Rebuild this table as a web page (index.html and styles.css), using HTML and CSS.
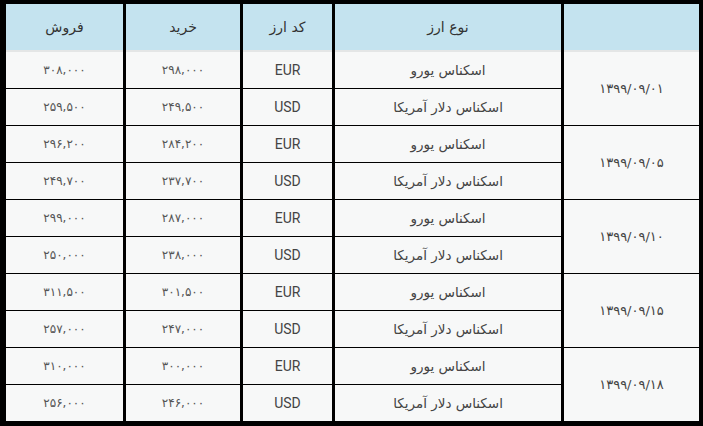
FILE: index.html
```html
<!DOCTYPE html>
<html lang="fa" dir="rtl">
<head>
<meta charset="utf-8">
<link rel="stylesheet" href="styles.css">
</head>
<body>
<div class="frame">
  <div class="grid">
    <div class="cell head"></div>
    <div class="cell head">نوع ارز</div>
    <div class="cell head">کد ارز</div>
    <div class="cell head">خرید</div>
    <div class="cell head">فروش</div>

    <div class="cell date">۱۳۹۹/۰۹/۰۱</div>
    <div class="cell fa">اسکناس یورو</div>
    <div class="cell code">EUR</div>
    <div class="cell num">۲۹۸,۰۰۰</div>
    <div class="cell num">۳۰۸,۰۰۰</div>
    <div class="cell fa">اسکناس دلار آمریکا</div>
    <div class="cell code">USD</div>
    <div class="cell num">۲۴۹,۵۰۰</div>
    <div class="cell num">۲۵۹,۵۰۰</div>

    <div class="cell date">۱۳۹۹/۰۹/۰۵</div>
    <div class="cell fa">اسکناس یورو</div>
    <div class="cell code">EUR</div>
    <div class="cell num">۲۸۴,۲۰۰</div>
    <div class="cell num">۲۹۶,۲۰۰</div>
    <div class="cell fa">اسکناس دلار آمریکا</div>
    <div class="cell code">USD</div>
    <div class="cell num">۲۳۷,۷۰۰</div>
    <div class="cell num">۲۴۹,۷۰۰</div>

    <div class="cell date">۱۳۹۹/۰۹/۱۰</div>
    <div class="cell fa">اسکناس یورو</div>
    <div class="cell code">EUR</div>
    <div class="cell num">۲۸۷,۰۰۰</div>
    <div class="cell num">۲۹۹,۰۰۰</div>
    <div class="cell fa">اسکناس دلار آمریکا</div>
    <div class="cell code">USD</div>
    <div class="cell num">۲۳۸,۰۰۰</div>
    <div class="cell num">۲۵۰,۰۰۰</div>

    <div class="cell date">۱۳۹۹/۰۹/۱۵</div>
    <div class="cell fa">اسکناس یورو</div>
    <div class="cell code">EUR</div>
    <div class="cell num">۳۰۱,۵۰۰</div>
    <div class="cell num">۳۱۱,۵۰۰</div>
    <div class="cell fa">اسکناس دلار آمریکا</div>
    <div class="cell code">USD</div>
    <div class="cell num">۲۴۷,۰۰۰</div>
    <div class="cell num">۲۵۷,۰۰۰</div>

    <div class="cell date last">۱۳۹۹/۰۹/۱۸</div>
    <div class="cell fa">اسکناس یورو</div>
    <div class="cell code">EUR</div>
    <div class="cell num">۳۰۰,۰۰۰</div>
    <div class="cell num">۳۱۰,۰۰۰</div>
    <div class="cell fa last">اسکناس دلار آمریکا</div>
    <div class="cell code last">USD</div>
    <div class="cell num last">۲۴۶,۰۰۰</div>
    <div class="cell num last">۲۵۶,۰۰۰</div>
  </div>
</div>
</body>
</html>
```
FILE: styles.css
```css
html, body {
  margin: 0;
  padding: 0;
  background: #000;
}
.frame {
  padding: 4px 4px 5px 6px;
  width: 693px;
}
.grid {
  direction: rtl;
  display: grid;
  grid-template-columns: 135px 226px 89px 114px 117px;
  grid-template-rows: 48px repeat(9, 37px) 36px;
  column-gap: 3px;
  background: #000;
  font-family: "DejaVu Sans", sans-serif;
}
.cell {
  background: #f7f8f8;
  border-bottom: 1px solid #000;
  display: flex;
  align-items: center;
  justify-content: center;
  color: #444;
  font-size: 13.5px;
}
.cell.last {
  border-bottom: none;
}
.head {
  background: #c4e3ef;
  border-bottom: 2px solid #e4e6e6;
  color: #333;
  font-size: 14px;
}
.date {
  grid-row: span 2;
  font-size: 13px;
  color: #444;
}
.code {
  font-family: Roboto, "Liberation Sans", sans-serif;
  font-size: 14px;
  color: #444;
}
.num {
  font-size: 12px;
  color: #555;
}
```
